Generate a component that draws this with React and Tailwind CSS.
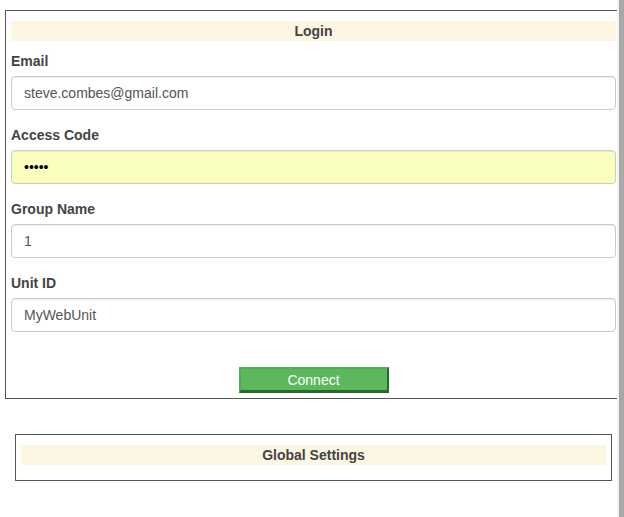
import React from "react";

function Field({ label, value, type = "text", bg = "bg-white", color = "text-[#555]" }) {
  return (
    <div className="mb-[15px]">
      <label className="block mb-[5px] leading-[20px] text-[14px] font-bold text-[#444]">{label}</label>
      <input
        type={type}
        value={value}
        readOnly
        className={`block w-full h-[34px] px-[12px] py-[6px] text-[14px] leading-[20px] ${color} ${bg} border border-[#ccc] rounded-[4px] outline-none shadow-[inset_0_1px_1px_rgba(0,0,0,0.075)]`}
        style={{ fontFamily: "'Liberation Sans', Arial, sans-serif" }}
      />
    </div>
  );
}

export default function App() {
  return (
    <div
      className="flex w-[624px] h-[517px] bg-white overflow-hidden"
      style={{ fontFamily: "'Liberation Sans', Arial, sans-serif" }}
    >
      <div className="w-[617px] shrink-0 overflow-hidden">
        <div className="mt-[10px] ml-[5px] w-[617px] border border-[#555] px-[5px] pt-[10px] pb-[5px]">
          <div className="h-[20px] leading-[20px] bg-[#fdf6e3] text-center text-[14px] font-bold text-[#444] mb-[10px]">
            Login
          </div>
          <Field label="Email" value="steve.combes@gmail.com" />
          <Field label="Access Code" value="12345" type="password" bg="bg-[#faffbd]" color="text-black" />
          <Field label="Group Name" value="1" />
          <Field label="Unit ID" value="MyWebUnit" />
          <div className="mt-[35px] flex justify-center">
            <button className="w-[150px] h-[26px] bg-[#5cb85c] text-white text-[14px] leading-[20px] border-t-2 border-l-2 border-r-2 border-b-[3px] border-t-[#4cae4c] border-l-[#4cae4c] border-r-[#2d672d] border-b-[#2d672d] p-0">
              Connect
            </button>
          </div>
        </div>
        <div className="mt-[35px] ml-[15px] w-[597px] border border-[#555] px-[5px] pt-[10px] pb-[15px]">
          <div className="h-[20px] leading-[20px] bg-[#fdf6e3] text-center text-[14px] font-bold text-[#444]">
            Global Settings
          </div>
        </div>
      </div>
      <div className="w-[2px] h-full bg-[#f3f3f3]" />
      <div className="w-[5px] h-full bg-[#a8a8a8]" />
    </div>
  );
}
